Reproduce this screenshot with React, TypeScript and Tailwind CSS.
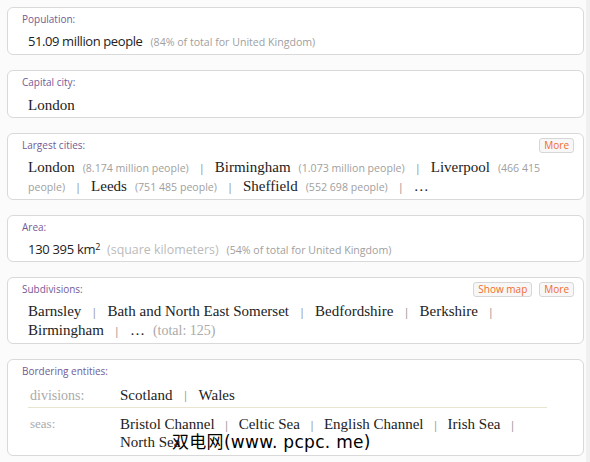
import React from 'react'

const sans = "font-['Open_Sans','DejaVu_Sans',sans-serif]"
const serif = "font-['Liberation_Serif','DejaVu_Serif',serif]"

function Card({
  label,
  buttons,
  children,
  className = '',
}: {
  label: string
  buttons?: string[]
  children: React.ReactNode
  className?: string
}) {
  return (
    <div
      className={`relative shrink-0 rounded-[6px] border border-[#d9d9d9] bg-white pl-[14px] pr-2 pt-[4px] ${className}`}
    >
      <div className={`${sans} text-[10px] leading-[14px] text-[#735a96]`}>{label}</div>
      {buttons && (
        <div className="absolute right-[9px] top-[4px] flex gap-[7px]">
          {buttons.map((b) => (
            <span
              key={b}
              className={`${sans} rounded-[3px] border border-[#d6d6d6] bg-[#f7f7f7] px-[4px] text-[10px] leading-[13px] text-[#f26c2a]`}
            >
              {b}
            </span>
          ))}
        </div>
      )}
      <div className="pl-[6px]">{children}</div>
    </div>
  )
}

function Sep({ tight }: { tight?: boolean }) {
  return (
    <span className={`${tight ? 'mx-[9px]' : 'mx-[10px]'} text-[11px] text-[#999]`}>|</span>
  )
}

function Note({ children }: { children: React.ReactNode }) {
  return (
    <span className={`${sans} ml-[8px] text-[10.6px] text-[#a0a0a0]`}>{children}</span>
  )
}

function Name({ children }: { children: React.ReactNode }) {
  return <span className={`${serif} text-[15px] text-[#222]`}>{children}</span>
}

export default function App() {
  return (
    <div className="relative flex h-[462px] w-[590px] flex-col gap-[15px] overflow-hidden bg-[#fbfbfb] pl-[7px] pr-[6px] pt-[7px]">
      <div className="absolute right-0 top-0 h-full w-[4px] bg-[#f0f0f0]" />

      <Card label="Population:" className="h-[48px]">
        <div className="mt-[6px] flex items-baseline leading-[18px]">
          <span className={`${sans} text-[13px] tracking-[-0.4px] text-[#222]`}>
            51.09 million people
          </span>
          <Note>(84% of total for United Kingdom)</Note>
        </div>
      </Card>

      <Card label="Capital city:" className="h-[48px]">
        <div className="mt-[6px] leading-[18px]">
          <Name>London</Name>
        </div>
      </Card>

      <Card label="Largest cities:" buttons={['More']} className="h-[67px]">
        <div className="mt-[6px] leading-[18px]">
          <div className="flex items-baseline">
            <Name>London</Name>
            <Note>(8.174 million people)</Note>
            <Sep />
            <Name>Birmingham</Name>
            <Note>(1.073 million people)</Note>
            <Sep />
            <Name>Liverpool</Name>
            <Note>(466 415</Note>
          </div>
          <div className="flex items-baseline">
            <span className={`${sans} text-[10.6px] text-[#a0a0a0]`}>people)</span>
            <Sep />
            <Name>Leeds</Name>
            <Note>(751 485 people)</Note>
            <Sep />
            <Name>Sheffield</Name>
            <Note>(552 698 people)</Note>
            <Sep />
            <Name>…</Name>
          </div>
        </div>
      </Card>

      <Card label="Area:" className="h-[47px]">
        <div className="mt-[6px] flex items-baseline leading-[18px]">
          <span className={`${sans} text-[13px] tracking-[-0.3px] text-[#222]`}>
            130 395 km<sup className="text-[9px]">2</sup>
          </span>
          <span className={`${sans} ml-[7px] text-[12.4px] text-[#bbb]`}>(square kilometers)</span>
          <Note>(54% of total for United Kingdom)</Note>
        </div>
      </Card>

      <Card label="Subdivisions:" buttons={['Show map', 'More']} className="h-[67px]">
        <div className="mt-[6px] leading-[18px]">
          <div className="flex items-baseline">
            <Name>Barnsley</Name>
            <Sep />
            <Name>Bath and North East Somerset</Name>
            <Sep />
            <Name>Bedfordshire</Name>
            <Sep />
            <Name>Berkshire</Name>
            <Sep />
          </div>
          <div className="flex items-baseline">
            <Name>Birmingham</Name>
            <Sep />
            <Name>…</Name>
            <span className={`${serif} ml-[8px] text-[14px] text-[#aaa]`}>(total: 125)</span>
          </div>
        </div>
      </Card>

      <Card label="Bordering entities:" className="h-[97px]">
        <div className="mr-[28px] mt-[6px]">
          <div className="flex h-[24px] items-center border-b border-[#e9e4cf] pl-[2px]">
            <span className={`${serif} w-[90px] text-[14px] text-[#aaa]`}>divisions:</span>
            <Name>Scotland</Name>
            <Sep />
            <Name>Wales</Name>
          </div>
          <div className="flex pl-[2px] pt-[8px]">
            <span className={`${serif} w-[90px] text-[13px] leading-[16px] text-[#aaa]`}>seas:</span>
            <div className="leading-[16px]">
              <div className="flex items-baseline">
                <Name>Bristol Channel</Name>
                <Sep tight />
                <Name>Celtic Sea</Name>
                <Sep tight />
                <Name>English Channel</Name>
                <Sep tight />
                <Name>Irish Sea</Name>
                <Sep tight />
              </div>
              <div>
                <Name>North Sea</Name>
              </div>
            </div>
          </div>
        </div>
      </Card>

      <div className="absolute left-[172px] top-[430px] font-['DejaVu_Sans','Noto_Sans_CJK_SC',sans-serif] text-[17px] leading-[22px] tracking-[0.3px] text-black">
        <span className="font-['Noto_Sans_CJK_SC',sans-serif]">双电网</span>(www. pcpc. me)
      </div>
    </div>
  )
}
